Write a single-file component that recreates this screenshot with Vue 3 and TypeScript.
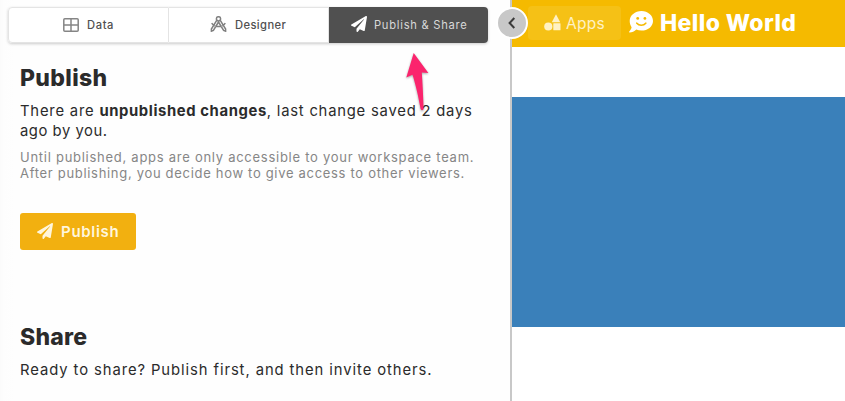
<script setup lang="ts">
const plane =
  'M476 3.2L12.5 270.6c-18.1 10.4-15.8 35.6 2.2 43.2L121 358.4l287.3-253.2c5.5-4.9 13.3 2.6 8.6 8.3L176 407v80.5c0 23.6 28.5 32.9 42.5 15.8L282 426l124.6 52.2c14.2 6 30.4-2.9 33-18.2l72-432C515 7.8 493.3-6.8 476 3.2z'
</script>

<template>
  <div class="screen">
    <section class="panel">
      <nav class="tabs">
        <button class="tab">
          <svg class="icon-grid" viewBox="0 0 16 14"><rect x=".8" y=".8" width="14.4" height="12.4" rx="1" /><path d="M8 1v12M1 7h14" /></svg>
          <span class="t-data">Data</span>
        </button>
        <button class="tab second">
          <svg class="icon-compass" viewBox="0 0 16 16">
            <circle cx="8" cy="2.8" r="2.1" />
            <path d="M6.200 4.300L.9 13v2.200l2-.7L8 6l5.100 8.500 2 .7V13L9.800 4.300M1.200 7.200C3.800 11.600 12.200 11.600 14.800 7.200" />
          </svg>
          <span class="t-designer">Designer</span>
        </button>
        <button class="tab active">
          <svg class="icon-plane" viewBox="0 0 512 512"><path :d="plane" /></svg>
          <span class="t-share">Publish &amp; Share</span>
        </button>
      </nav>

      <div class="block publish">
        <h1 class="h-publish">Publish</h1>
        <p class="lead">
          <span class="l1a">There are </span><b class="l1b">unpublished changes</b><span class="l1c">, last change saved 2 days</span><br />
          <span class="l2">ago by you.</span>
        </p>
        <p class="note">
          <span class="n1">Until published, apps are only accessible to your workspace team.</span><br />
          <span class="n2">After publishing, you decide how to give access to other viewers.</span>
        </p>
        <button class="cta">
          <svg class="icon-plane" viewBox="0 0 512 512"><path :d="plane" /></svg>
          <span class="t-cta">Publish</span>
        </button>
      </div>
      <div class="block share">
        <h1 class="h-share">Share</h1>
        <p class="lead"><span class="s1">Ready to share? Publish first, and then invite others.</span></p>
      </div>

      <button class="collapse" aria-label="Collapse">
        <svg viewBox="0 0 8 12"><path d="M6.3 1L1.6 6l4.700 5" /></svg>
      </button>
      <svg class="pointer" viewBox="0 0 26 62">
        <path d="M7.700 2L22.400 22l-6.600-.4C16.600 33 17.300 47 17.600 58q-1.600 2.500-3 0C12.300 45 9.500 33 6.500 23.800L.3 26.600z" />
      </svg>
    </section>

    <main class="preview">
      <header class="bar">
        <a class="apps">
          <svg class="icon-shapes" viewBox="0 0 17 17"><path d="M12 .3L16.200 8.300H7.800z" /><circle cx="4.300" cy="12.500" r="4.100" /><rect x="9.300" y="9.300" width="7.200" height="7" rx=".5" /></svg>
          <span class="t-apps">Apps</span>
        </a>
        <div class="title">
          <svg class="icon-smile" viewBox="0 0 24 22">
            <path class="bubble" d="M12.500 0C18.800 0 24 4.400 24 10S18.800 19.600 12.500 19.600c-1.900 0-3.700-.4-5.200-1.100C5.400 20.200 3 21.500.6 21.500c-.6 0-.7-.6-.3-1 1.100-1.200 2-2.600 2.300-4.300C1.400 14.500.7 12.400.7 10 .7 4.400 6 0 12.500 0z" />
            <circle cx="8.700" cy="7.400" r="1.400" /><circle cx="15.900" cy="7.400" r="1.400" />
            <path class="mouth" d="M7.800 12.200c2.300 2.700 6.700 2.700 9 0" />
          </svg>
          <span class="t-hello">Hello World</span>
        </div>
      </header>
      <div class="hero"></div>
    </main>
  </div>
</template>

<style>
body { margin: 0; overflow: hidden; }
</style>

<style scoped>
.screen { display: flex; width: 845px; height: 401px; background: #fff; font-family: Inter, "Liberation Sans", sans-serif; color: #2b2b2b; overflow: hidden; }
.panel { position: relative; box-sizing: border-box; width: 512px; flex: none; border-right: 2px solid #c8c8c8; padding: 7px 0 0 8px; background: linear-gradient(90deg, #fbfbfb 0, #fdfdfd 4px, #fefefe 14px); }
button { font: inherit; border: 0; padding: 0; margin: 0; background: none; color: inherit; }
span, b { white-space: pre; }
.tabs { display: flex; width: 480px; height: 36px; border-radius: 4px; box-shadow: 0 1px 3px rgba(0, 0, 0, .2); }
.tab { box-sizing: border-box; display: flex; align-items: center; width: 161px; border: 1px solid #e4e4e4; background: #fff; border-radius: 4px 0 0 4px; font-size: 11.2px; font-weight: 500; color: #505050; padding-left: 54px; }
.tab.second { width: 160px; border-left: 0; border-radius: 0; padding-left: 41px; }
.tab.active { width: 159px; border: 0; border-radius: 0 4px 4px 0; background: #505050; color: #d8d8d8; padding-left: 22px; font-weight: 400; }
.t-data { letter-spacing: .6px; }
.t-designer { letter-spacing: .4px; }
.t-share { letter-spacing: .72px; }
svg { display: block; flex: none; }
.icon-grid { width: 16px; height: 14px; margin: -1px 8px 0 0; fill: none; stroke: #858585; stroke-width: 1.5; }
.icon-compass { width: 17px; height: 16px; margin-right: 8px; fill: none; stroke: #808080; stroke-width: 1.5; margin-top: -2px; }
.icon-plane { width: 16px; height: 16px; fill: currentColor; }
.active .icon-plane { color: #fff; margin: -3px 7px 0 0; }
.active .t-share { margin-top: -1px; }
.block { padding-left: 12px; }
.publish { height: 239px; padding-top: 20px; }
h1 { margin: 0; font-size: 23px; line-height: 30px; font-weight: 800; }
.h-publish { letter-spacing: .35px; }
.h-share { letter-spacing: .25px; }
.lead { margin: 8px 0 0; font-size: 14.8px; line-height: 20px; }
.l1a { letter-spacing: .79px; }
.l1b { letter-spacing: .62px; }
.l1c { letter-spacing: .78px; }
.l2 { letter-spacing: .55px; }
.s1 { letter-spacing: .92px; }
.note { margin: 8px 0 0; font-size: 13px; line-height: 16px; color: #868686; }
.n1 { letter-spacing: .73px; }
.n2 { letter-spacing: .69px; }
.cta { box-sizing: border-box; display: flex; align-items: center; width: 116px; height: 37px; margin-top: 32px; padding-left: 17px; border-radius: 3px; background: #f2b010; color: #fff6dc; font-size: 15px; font-weight: 600; }
.cta .icon-plane { margin: -1px 8px 0 0; }
.t-cta { letter-spacing: .7px; }
.share { padding-top: 20px; }
.collapse { position: absolute; left: 496px; top: 7px; box-sizing: border-box; width: 32px; height: 32px; border: 2px solid #fff; border-radius: 50%; background: #c8c8c8; display: flex; align-items: center; justify-content: center; z-index: 2; }
.collapse svg { width: 8px; height: 12px; fill: none; stroke: #3b3b3b; stroke-width: 2; }
.pointer { position: absolute; left: 406px; top: 51px; width: 26px; height: 62px; fill: #fb246d; filter: drop-shadow(0 1px 1px rgba(0, 0, 0, .35)); }
.preview { flex: 1; }
.bar { box-sizing: border-box; display: flex; height: 47px; background: #f5ba00; padding: 6px 0 0 16px; }
.apps { box-sizing: border-box; display: flex; align-items: center; width: 93px; height: 34px; border-radius: 4px; background: #f5c116; color: #fff1c4; padding-left: 16px; font-size: 15.5px; }
.t-apps { letter-spacing: .3px; }
.icon-shapes { width: 17px; height: 17px; fill: #fff1c4; margin: -2px 5px 0 0; }
.title { display: flex; height: 34px; align-items: center; padding-left: 8px; color: #fff; font-size: 23px; font-weight: 800; }
.icon-smile { width: 24px; height: 22px; fill: #f5ba00; margin: -2px 7px 0 0; }
.icon-smile .bubble { fill: #fff; }
.icon-smile .mouth { fill: none; stroke: #f5ba00; stroke-width: 1.600; stroke-linecap: round; }
.t-hello { letter-spacing: .4px; }
.hero { margin-top: 50px; height: 230px; background: #3a80ba; }
</style>
